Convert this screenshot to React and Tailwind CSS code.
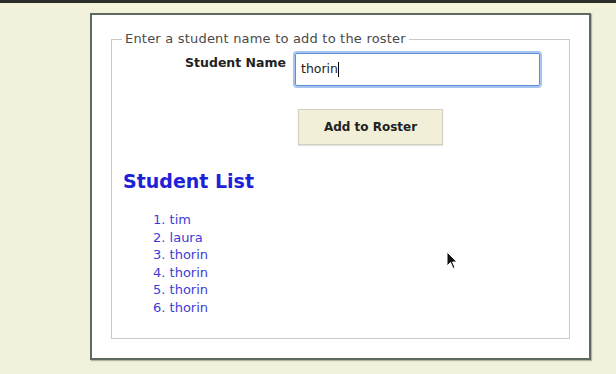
import React from 'react';

const students = ['tim', 'laura', 'thorin', 'thorin', 'thorin', 'thorin'];

const font = { fontFamily: '"DejaVu Sans", "Open Sans", sans-serif' };

const App = () => {
    return (
        <div className="relative w-[616px] h-[374px] overflow-hidden bg-[#f2f1dc]" style={font}>
            {/* top strip */}
            <div className="h-[3px] bg-[#2c2c28]" />

            {/* page box */}
            <div className="ml-[90px] mt-[10px] w-[501px] h-[347px] border-2 border-[#5e6a60] bg-white px-[19px] pt-[16px] shadow-[1px_1px_1px_rgba(0,0,0,0.25)]">
                <fieldset className="w-[459px] h-[308px] border border-[#c9c9c9] px-0">
                    <legend className="ml-[10px] px-[3px] text-[13px] leading-[16px] tracking-[0.2px] text-[#4a4a4a]">
                        Enter a student name to add to the roster
                    </legend>

                    <div className="flex items-start mt-[6px]">
                        <label className="w-[174px] pt-[1px] text-right text-[12.5px] font-bold text-[#222]">
                            Student Name
                        </label>
                        <div className="ml-[9px] w-[245px] h-[33px] flex items-center px-[5px] rounded-[2px] border border-[#5b8fd9] shadow-[0_0_0_2px_#a5c4ef] text-[12.5px] text-[#222]">
                            thorin
                            <span className="w-px h-[15px] bg-black" />
                        </div>
                    </div>

                    <button className="ml-[186px] mt-[23px] w-[145px] h-[36px] border border-[#d2d0bc] bg-[#f1efd8] text-[12px] font-bold text-[#222] shadow-[0_1px_1px_rgba(0,0,0,0.1)]">
                        Add to Roster
                    </button>

                    <h2 className="ml-[11px] mt-[23px] text-[19px] leading-[26px] font-bold text-[#1e22d6]">
                        Student List
                    </h2>

                    <ol className="ml-[41px] mt-[17px] text-[13px] leading-[17.6px] text-[#3d3dd6]">
                        {students.map((name, idx) => (
                            <li key={idx}>{idx + 1}. {name}</li>
                        ))}
                    </ol>
                </fieldset>
            </div>

            {/* mouse pointer */}
            <svg className="absolute left-[446px] top-[251px]" width="12" height="19" viewBox="0 0 12 19">
                <path d="M1 1 L1 15 L4.5 11.5 L7 17.5 L9 16.6 L6.6 11 L11 11 Z" fill="#111" stroke="#fff" strokeWidth="1" />
            </svg>
        </div>
    );
};

export default App;
